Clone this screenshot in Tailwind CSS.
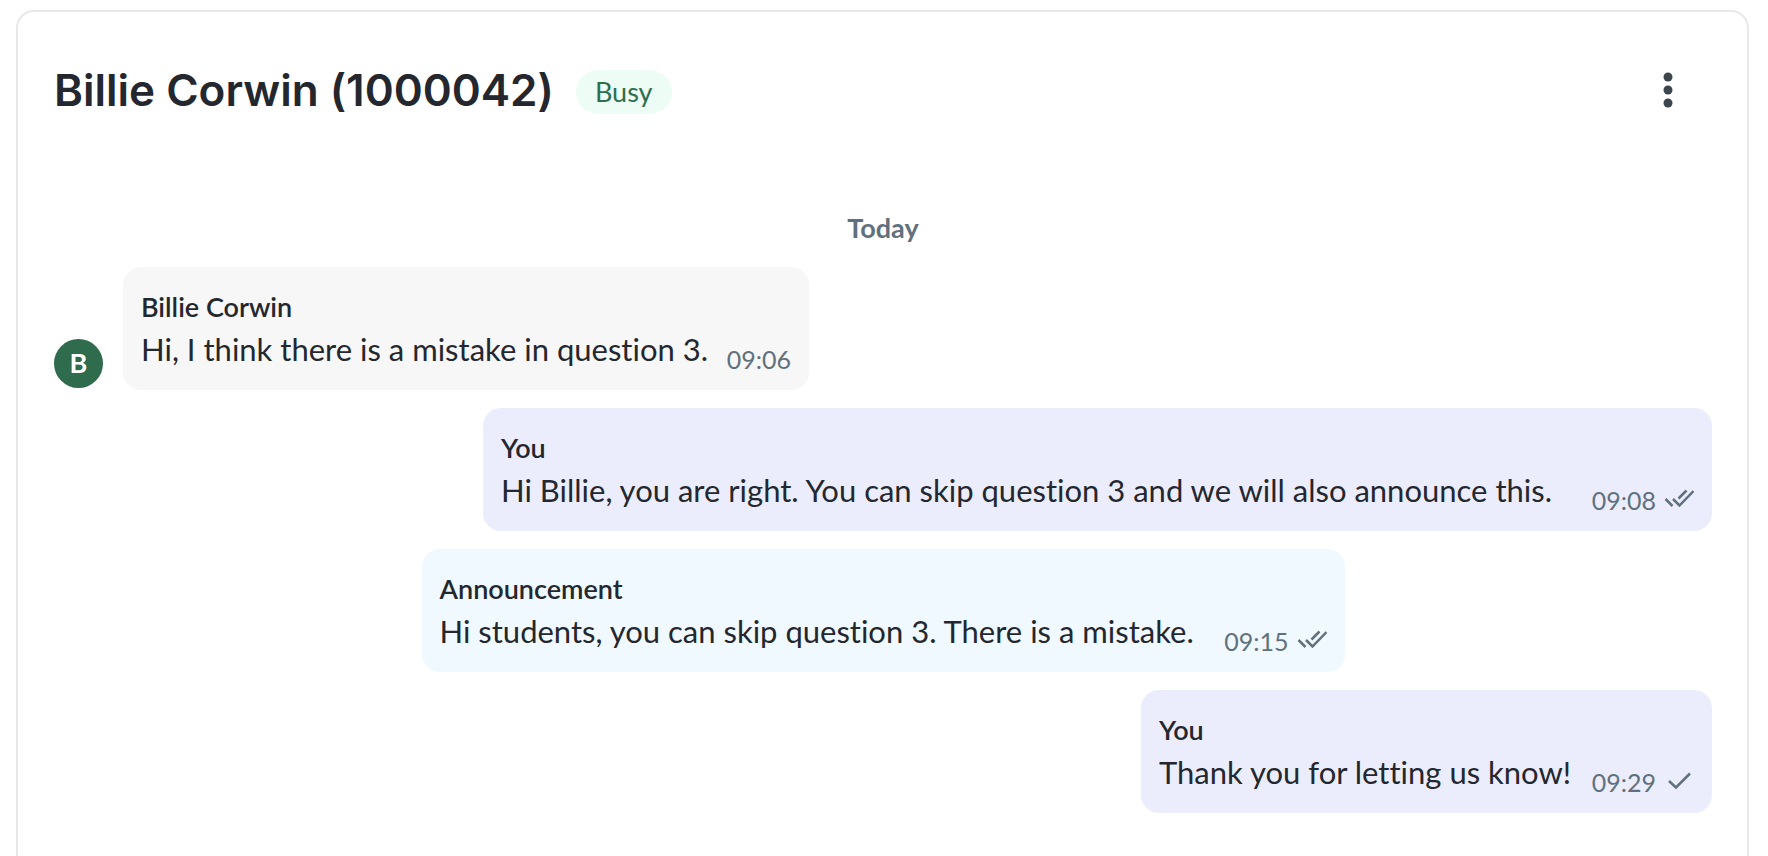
<!DOCTYPE html>
<html lang="en">
<head>
    <meta charset="UTF-8">
    <meta name="viewport" content="width=device-width, initial-scale=1.0">
    <script src="https://cdn.jsdelivr.net/npm/@tailwindcss/browser@4"></script>
    <title>Chat</title>
</head>
<body class="bg-white font-['Lato',sans-serif] text-[#24272e] [font-variant-ligatures:none]">
    <main class="mt-[10px] ml-4 mr-[19px] min-h-[calc(100vh-10px)] rounded-t-[18px] border-2 border-b-0 border-[#e8e8e8] pl-9 pr-[35px] pb-8">
        <header class="flex items-center pt-12">
            <h1 class="font-['Inter',sans-serif] text-[44px] leading-[60px] font-semibold">Billie Corwin (1000042)</h1>
            <span class="ml-[22px] mt-1 rounded-full bg-[#edfcf5] px-[19px] text-[27px] leading-[44px] text-[#2f6f4f]">Busy</span>
            <button type="button" aria-label="More options" class="ml-auto mr-5 flex h-12 w-12 items-center justify-center text-[#3d454d]">
                <svg class="h-9 w-9" viewBox="0 0 36 36" fill="currentColor">
                    <circle cx="18" cy="5" r="4.5" />
                    <circle cx="18" cy="18" r="4.5" />
                    <circle cx="18" cy="31" r="4.5" />
                </svg>
            </button>
        </header>
        <h2 class="mt-[90px] text-center text-[27px] leading-9 font-bold text-[#60717d]">Today</h2>
        <div class="mt-[21px] flex flex-col gap-[18px]">
            <!-- incoming -->
            <div class="flex items-end">
                <div class="mr-5 mb-[2px] flex h-[49px] w-[49px] items-center justify-center rounded-full bg-[#2f6b4d] text-[27px] font-bold text-white">B</div>
                <div class="w-[686px] rounded-[18px] bg-[#f7f7f7] px-[18px] pt-[22px] pb-[17px]">
                    <p class="text-[27px] leading-9 font-semibold">Billie Corwin</p>
                    <div class="flex items-end justify-between whitespace-nowrap">
                        <p class="text-[31px] leading-[48px]">Hi, I think there is a mistake in question 3.</p>
                        <time class="text-[25px] leading-7 text-[#60717d]">09:06</time>
                    </div>
                </div>
            </div>
            <!-- outgoing, read -->
            <div class="w-[1229px] self-end rounded-[18px] bg-[#ebedfd] px-[18px] pt-[22px] pb-[17px]">
                <p class="text-[27px] leading-9 font-semibold">You</p>
                <div class="flex items-end justify-between whitespace-nowrap">
                    <p class="text-[31px] leading-[48px]">Hi Billie, you are right. You can skip question 3 and we will also announce this.</p>
                    <div class="flex items-center gap-2 text-[#60717d]">
                        <time class="text-[25px] leading-7">09:08</time>
                        <svg class="h-7 w-[30px]" viewBox="0 0 30 28" fill="none" stroke="currentColor" stroke-width="2.5">
                            <path d="M1.500 13l7 7M9 13l6.500 6.500L29.500 5M14.500 12.500l8-8" />
                        </svg>
                    </div>
                </div>
            </div>
            <!-- announcement -->
            <div class="w-[923px] self-center rounded-[18px] bg-[#f0f9ff] px-[18px] pt-[22px] pb-[17px]">
                <p class="text-[27px] leading-9 font-semibold">Announcement</p>
                <div class="flex items-end justify-between whitespace-nowrap">
                    <p class="text-[31px] leading-[48px]">Hi students, you can skip question 3. There is a mistake.</p>
                    <div class="flex items-center gap-2 text-[#60717d]">
                        <time class="text-[25px] leading-7">09:15</time>
                        <svg class="h-7 w-[30px]" viewBox="0 0 30 28" fill="none" stroke="currentColor" stroke-width="2.5">
                            <path d="M1.500 13l7 7M9 13l6.500 6.500L29.500 5M14.500 12.500l8-8" />
                        </svg>
                    </div>
                </div>
            </div>
            <!-- outgoing, sent -->
            <div class="w-[571px] self-end rounded-[18px] bg-[#ebedfd] px-[18px] pt-[22px] pb-[17px]">
                <p class="text-[27px] leading-9 font-semibold">You</p>
                <div class="flex items-end justify-between whitespace-nowrap">
                    <p class="text-[31px] leading-[48px]">Thank you for letting us know!</p>
                    <div class="flex items-center gap-2 text-[#60717d]">
                        <time class="text-[25px] leading-7">09:29</time>
                        <svg class="h-7 w-[30px]" viewBox="0 0 30 28" fill="none" stroke="currentColor" stroke-width="2.5">
                            <path d="M5 13l7 6.500L26 5.500" />
                        </svg>
                    </div>
                </div>
            </div>
        </div>
    </main>
</body>
</html>
